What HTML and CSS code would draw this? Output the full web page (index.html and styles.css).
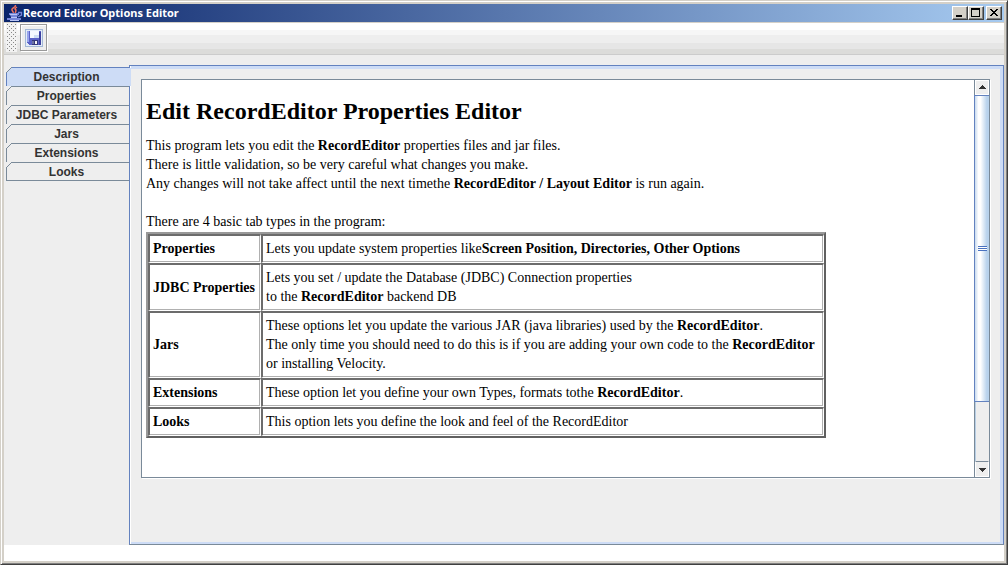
FILE: index.html
```html
<!DOCTYPE html>
<html lang="en">
<head>
<meta charset="utf-8">
<title>Record Editor Options Editor</title>
<link rel="stylesheet" href="styles.css">
</head>
<body>
<div class="window">
  <header class="titlebar">
    <svg class="logo" viewBox="0 0 16 16" width="16" height="16" aria-hidden="true">
      <path d="M8 0c2 2-4 3-3 5 0 1 2 2 1 3M10 2c-3 2-2 2-1 3 0 1 0 2-1 3" fill="none" stroke="#f0705c" stroke-width="1.5"/>
      <path d="M2 8h10v2H2zM3 10h8l-1 2H4zM0 13h14v2H0z" fill="#7484d8"/>
      <path d="M11 7.500h3.500v2.500l-3.500 2" fill="none" stroke="#7484d8" stroke-width="1.3"/>
      <path d="M3 9h7v1H3zM4 12h6v1H4zM3 15h9v1H3z" fill="#b8c4f4"/>
    </svg>
    <h1 class="title">Record Editor Options Editor</h1>
    <div class="controls">
      <button class="control" aria-label="Minimize"><svg width="12" height="10" viewBox="0 0 12 10"><path d="M2 7h6v2H2z"/></svg></button>
      <button class="control" aria-label="Maximize"><svg width="12" height="10" viewBox="0 0 12 10"><path d="M1 0h9v9H1zM2 2v6h7V2z" fill-rule="evenodd"/></svg></button>
      <button class="control close" aria-label="Close"><svg width="12" height="10" viewBox="0 0 12 10" shape-rendering="crispEdges"><path d="M2 1h2v1h1v1h2V2h1V1h2v1H9v1H8v1H7v1h1v1h1v1h1v1H8V7H7V6H5v1H4v1H2V7h1V6h1V5h1V4H4V3H3V2H2z"/></svg></button>
    </div>
  </header>
  <div class="toolbar">
    <div class="grip"></div>
    <button class="save" aria-label="Save">
      <svg width="18" height="18" viewBox="0 0 18 18" shape-rendering="crispEdges">
        <path d="M0 0h18v18H0z" fill="#a3b8d6"/><path d="M1 1h16v16H1z" fill="#e4ecf8"/>
        <path d="M2 2h14v14H4l-2-2z" fill="#5a62c8"/>
        <path d="M2 2h2v11H2z" fill="#98a4ec"/><path d="M14 3h2v13h-2z" fill="#3c40a0"/>
        <path d="M5 2h9v7H5z" fill="#f4f8ff"/><path d="M9 6h5v3H9z" fill="#cddcf4"/>
        <path d="M7 11h6v5H7z" fill="#34387c"/><path d="M10 12h2v3h-2z" fill="#f4f4f4"/><path d="M7 12h2v3H7z" fill="#6c73a4"/>
      </svg>
    </button>
  </div>
  <main class="workspace">
    <nav class="tabs">
      <button class="tab selected">Description</button>
      <button class="tab">Properties</button>
      <button class="tab">JDBC Parameters</button>
      <button class="tab">Jars</button>
      <button class="tab">Extensions</button>
      <button class="tab">Looks</button>
    </nav>
    <section class="panel">
      <div class="viewer">
        <article class="document">
          <h2>Edit RecordEditor Properties Editor</h2>
          <p>This program lets you edit the <b>RecordEditor</b> properties files and jar files.<br>
          There is little validation, so be very careful what changes you make.<br>
          Any changes will not take affect until the next timethe <b>RecordEditor / Layout Editor</b> is run again.</p>
          <p>There are 4 basic tab types in the program:</p>
          <table>
            <tr><th>Properties</th><td>Lets you update system properties like<b>Screen Position, Directories, Other Options</b></td></tr>
            <tr><th>JDBC Properties</th><td>Lets you set / update the Database (JDBC) Connection properties<br>to the <b>RecordEditor</b> backend DB</td></tr>
            <tr><th>Jars</th><td>These options let you update the various JAR (java libraries) used by the <b>RecordEditor</b>.<br>The only time you should need to do this is if you are adding your own code to the <b>RecordEditor</b><br>or installing Velocity.</td></tr>
            <tr><th>Extensions</th><td>These option let you define your own Types, formats tothe <b>RecordEditor</b>.</td></tr>
            <tr><th>Looks</th><td>This option lets you define the look and feel of the RecordEditor</td></tr>
          </table>
        </article>
        <div class="scrollbar">
          <button class="arrow" aria-label="Scroll up"><svg width="9" height="5" viewBox="0 0 9 5" shape-rendering="crispEdges"><path fill="#333" d="M4 0h1v1h1v1h1v1h1v1H1V3h1V2h1V1h1z"/></svg></button>
          <div class="track"><div class="thumb"><span class="ridges"></span></div></div>
          <button class="arrow" aria-label="Scroll down"><svg width="9" height="5" viewBox="0 0 9 5" shape-rendering="crispEdges"><path fill="#333" d="M1 1h7v1H7v1H6v1H5v1H4V4H3V3H2V2H1z"/></svg></button>
        </div>
      </div>
    </section>
  </main>
</div>
</body>
</html>
```
FILE: styles.css
```css
* { box-sizing: border-box; }
body { margin: 0; }
button { margin: 0; padding: 0; font: inherit; color: inherit; }

.window {
  display: flex;
  flex-direction: column;
  min-height: 100vh;
  padding: 3px;
  background: #fff;
  border: 1px solid #d4d0c8;
  border-right-color: #404040;
  border-bottom-color: #404040;
  box-shadow: inset 1px 1px #fff, inset -1px -1px #808080, inset 0 0 0 3px #d4d0c8;
  font: bold 12px/19px "Liberation Sans", Arial, sans-serif;
  color: #333;
}

.titlebar {
  display: flex;
  align-items: center;
  height: 18px;
  padding: 0 2px 0 3px;
  background: linear-gradient(90deg, #0a246a, #a6caf0);
  color: #fff;
}
.title { flex: 1; margin: 0; font: bold 11px/18px "Noto Sans", Tahoma, sans-serif; }
.controls { display: flex; }
.control {
  display: flex;
  align-items: center;
  justify-content: center;
  width: 16px;
  height: 14px;
  background: #d4d0c8;
  border: 1px solid;
  border-color: #fff #404040 #404040 #fff;
  box-shadow: inset -1px -1px #808080;
}
.close { margin-left: 2px; }

.toolbar {
  display: flex;
  align-items: center;
  height: 33px;
  padding: 0 2px 2px;
  border-top: 1px solid #d4d0c8;
  border-bottom: 1px solid #ccc;
  background: linear-gradient(#fff 0 22%, #f6f6f6 22% 40%, #eee 40% 64%, #e6e6e6 64% 85%, #dcdcda 85%);
}
.grip {
  width: 11px;
  align-self: stretch;
  background:
    linear-gradient(#999, #999) 0 0 / 1px 1px,
    #f2f2f2;
  background:
    conic-gradient(#888 25%, transparent 0) -1px 1px / 4px 4px,
    #f2f2f2;
  background:
    conic-gradient(from 270deg at 1px 1px, #888 25%, transparent 0) 1px 1px / 4px 4px,
    conic-gradient(from 270deg at 1px 1px, #888 25%, transparent 0) 3px 3px / 4px 4px,
    #f2f2f2;
}
.save {
  display: flex;
  align-items: center;
  justify-content: center;
  width: 27px;
  height: 27px;
  margin-left: 3px;
  background: #eee;
  border: 1px solid #999;
  box-shadow: inset 1px 1px #fff, 1px 1px #fff;
}

.workspace {
  display: flex;
  flex: 1;
  margin-bottom: 16px;
  padding-top: 10px;
  background: #eee;
}
.tabs { width: 125px; padding: 2px 0 0 2px; }
.tab {
  position: relative;
  display: block;
  width: 100%;
  height: 19px;
  background: #eee;
  border: 0;
  border-top: 1px solid #7a8a99;
  border-left: 1px solid #7a8a99;
  text-align: center;
  padding-right: 3px;
  line-height: 18px;
}
.tab::before {
  content: "";
  position: absolute;
  left: -1px;
  top: -1px;
  width: 6px;
  height: 6px;
  background: linear-gradient(135deg, #eee 0 43%, #7a8a99 43% 56%, transparent 56%);
}
.tab:last-child { border-bottom: 1px solid #7a8a99; }
.selected { background: #cddcf6; border-color: #6382bf; }
.selected::after {
  content: "";
  position: absolute;
  top: 0;
  bottom: 0;
  left: 100%;
  width: 2px;
  background: #cddcf6;
}

.panel {
  flex: 1;
  min-width: 0;
  padding: 10px;
  background: #eee;
  border: 1px solid #6382bf;
  border-bottom-color: #7a8a99;
  box-shadow: inset 1px 0 #fff, inset -3px -2px #cddcf6, inset 0 3px #cddcf6;
}
.viewer {
  display: flex;
  margin: 3px 3px 0 1px;
  background: #fff;
  border: 1px solid #7a8a99;
  box-shadow: 1px 1px #fff;
}
.document {
  flex: 1;
  min-width: 0;
  padding: 16px 3px 39px 4px;
  font: 14px/19px "Liberation Serif", "Times New Roman", serif;
  color: #000;
}
.document h2 { margin: 0 0 10px; font-size: 24px; line-height: 30px; }
.document p { margin: 0 0 19px; }
.document p + p { margin: 0; }
.document table {
  margin: 1px 0 0;
  border-spacing: 0;
  border: 2px solid;
  border-color: #999 #606060 #606060 #999;
}
.document th, .document td {
  padding: 3px 5px 4px 3px;
  border: 1px solid #fff;
  border-top: 2px solid #6c6c6c;
  border-left: 2px solid #6c6c6c;
  box-shadow: inset -1px -1px #b0b0b0;
  text-align: left;
}
.document td { padding-right: 8px; }

.scrollbar { display: flex; flex-direction: column; width: 15px; border-left: 1px solid #7a8a99; }
.arrow {
  display: flex;
  align-items: center;
  justify-content: center;
  height: 15px;
  background: #eee;
  border: 1px solid #fff;
}
.arrow:last-child { height: 16px; border-top-color: #7a8a99; }
.track { flex: 1; background: #eee; border-left: 1px solid #b8cfe5; }
.thumb {
  display: flex;
  align-items: center;
  justify-content: center;
  height: 84%;
  margin-left: -2px;
  border: 1px solid #6382bf;
  border-right: 0;
  background: linear-gradient(90deg, #c8daee, #fff 25% 40%, #b8d2ec 85%);
}
.ridges { width: 9px; height: 5px; background: repeating-linear-gradient(#4a72c0 0 1px, #fff 1px 2px); }
```
